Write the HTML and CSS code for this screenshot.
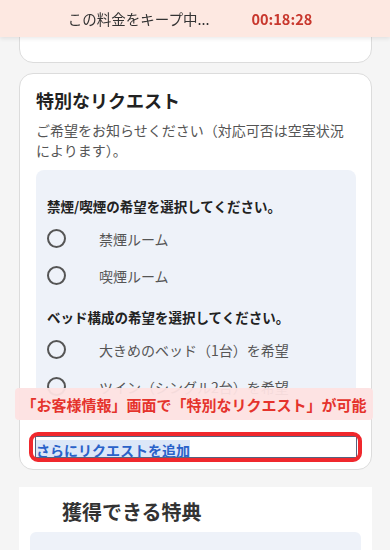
FILE: index.html
```html
<!DOCTYPE html>
<html lang="ja">
<head>
<meta charset="utf-8">
<link rel="stylesheet" href="styles.css">
</head>
<body>
<header class="keep-bar">
  <span class="keep-text">この料金をキープ中...</span>
  <span class="keep-timer">00:18:28</span>
</header>
<main class="page">
  <section class="card card-top"></section>
  <section class="card card-request">
    <h2 class="card-title">特別なリクエスト</h2>
    <p class="card-desc">ご希望をお知らせください（対応可否は空室状況によります）。</p>
    <div class="options">
      <p class="opt-heading">禁煙/喫煙の希望を選択してください。</p>
      <label class="radio-row"><span class="radio"></span><span class="radio-label">禁煙ルーム</span></label>
      <label class="radio-row"><span class="radio"></span><span class="radio-label">喫煙ルーム</span></label>
      <p class="opt-heading opt-heading-2">ベッド構成の希望を選択してください。</p>
      <label class="radio-row"><span class="radio"></span><span class="radio-label">大きめのベッド（1台）を希望</span></label>
      <label class="radio-row"><span class="radio"></span><span class="radio-label">ツイン（シングル2台）を希望</span></label>
    </div>
    <div class="link-wrap">
      <a class="more-link" href="#"><span class="more-text">さらにリクエストを追加</span></a>
      <span class="red-frame"></span>
    </div>
  </section>
  <section class="card card-perks">
    <h2 class="perks-title">獲得できる特典</h2>
    <div class="perks-box"><span class="perks-amount">¥ 224</span></div>
  </section>
</main>
<div class="callout">「お客様情報」画面で「特別なリクエスト」が可能</div>
</body>
</html>
```
FILE: styles.css
```css
* { box-sizing: border-box; }
html, body { margin: 0; padding: 0; }
body {
  background: #f5f5f5;
  font-family: "Noto Sans CJK JP", "Noto Sans", sans-serif;
  color: #222;
  width: 390px;
  height: 550px;
  overflow: hidden;
  position: relative;
}
.keep-bar {
  position: fixed;
  top: 0; left: 0; right: 0;
  height: 37px;
  background: #fde8e1;
  box-shadow: 0 2px 4px rgba(0,0,0,0.08);
  display: flex;
  align-items: center;
  justify-content: center;
  gap: 42px;
  padding-right: 10px;
  z-index: 5;
}
.keep-text { font-size: 14.5px; color: #333; }
.keep-timer { font-size: 14.5px; font-weight: 700; color: #c8372d; }
.page { padding: 0 18px 0 19px; display: flex; flex-direction: column; }
.card {
  background: #fff;
  border: 1px solid #dcdcdc;
  border-radius: 14px;
}
.card-top { height: 63px; }
.card-request {
  margin-top: 10px;
  padding: 13px 15px 12px 16px;
}
.card-title {
  margin: 0;
  font-size: 18px;
  line-height: 26px;
  font-weight: 700;
  color: #222;
}
.card-desc {
  margin: 7px 0 0;
  font-size: 14px;
  line-height: 20px;
  color: #555;
}
.options {
  margin-top: 10px;
  background: #eef2f9;
  border-radius: 8px;
  padding: 26px 11px 10px;
}
.opt-heading {
  margin: 0 0 4px;
  font-size: 13.5px;
  line-height: 20px;
  font-weight: 700;
  color: #222;
}
.opt-heading-2 { margin-top: 13px; }
.radio-row {
  display: flex;
  align-items: center;
  gap: 33px;
  height: 37px;
}
.radio {
  width: 19px; height: 19px;
  border: 2px solid #555;
  border-radius: 50%;
  flex: none;
}
.radio-label { font-size: 14px; color: #555; }
.link-wrap {
  position: relative;
  margin-top: 22px;
}
.more-link {
  display: block;
  height: 20px;
  outline: 1px solid #56637f;
  text-decoration: none;
}
.more-text {
  font-size: 14px;
  line-height: 20px;
  font-weight: 700;
  color: #2a62c9;
  background: #dce7f8;
}
.red-frame {
  position: absolute;
  top: -5px; bottom: -5px; left: -7px; right: -6px;
  border: 4px solid #f0282d;
  border-radius: 9px;
}
.card-perks {
  margin-top: 17px;
  border: none;
  border-radius: 0;
  padding: 11px 11px 0;
  min-height: 80px;
}
.perks-title {
  margin: 0 0 6px;
  padding-left: 32px;
  font-size: 20px;
  line-height: 28px;
  font-weight: 700;
  color: #333;
}
.perks-box {
  background: #eef2f9;
  border-radius: 6px;
  height: 60px;
  padding: 13px 15px 0;
  text-align: right;
}
.perks-amount { font-size: 14px; color: #333; }
.callout {
  position: absolute;
  left: 15px;
  top: 388px;
  width: 358px;
  height: 32px;
  background: rgba(253, 226, 226, 0.95);
  border-radius: 4px;
  color: #e5332c;
  font-size: 15px;
  font-weight: 700;
  display: flex;
  align-items: center;
  justify-content: center;
  white-space: nowrap;
  z-index: 4;
}
```
